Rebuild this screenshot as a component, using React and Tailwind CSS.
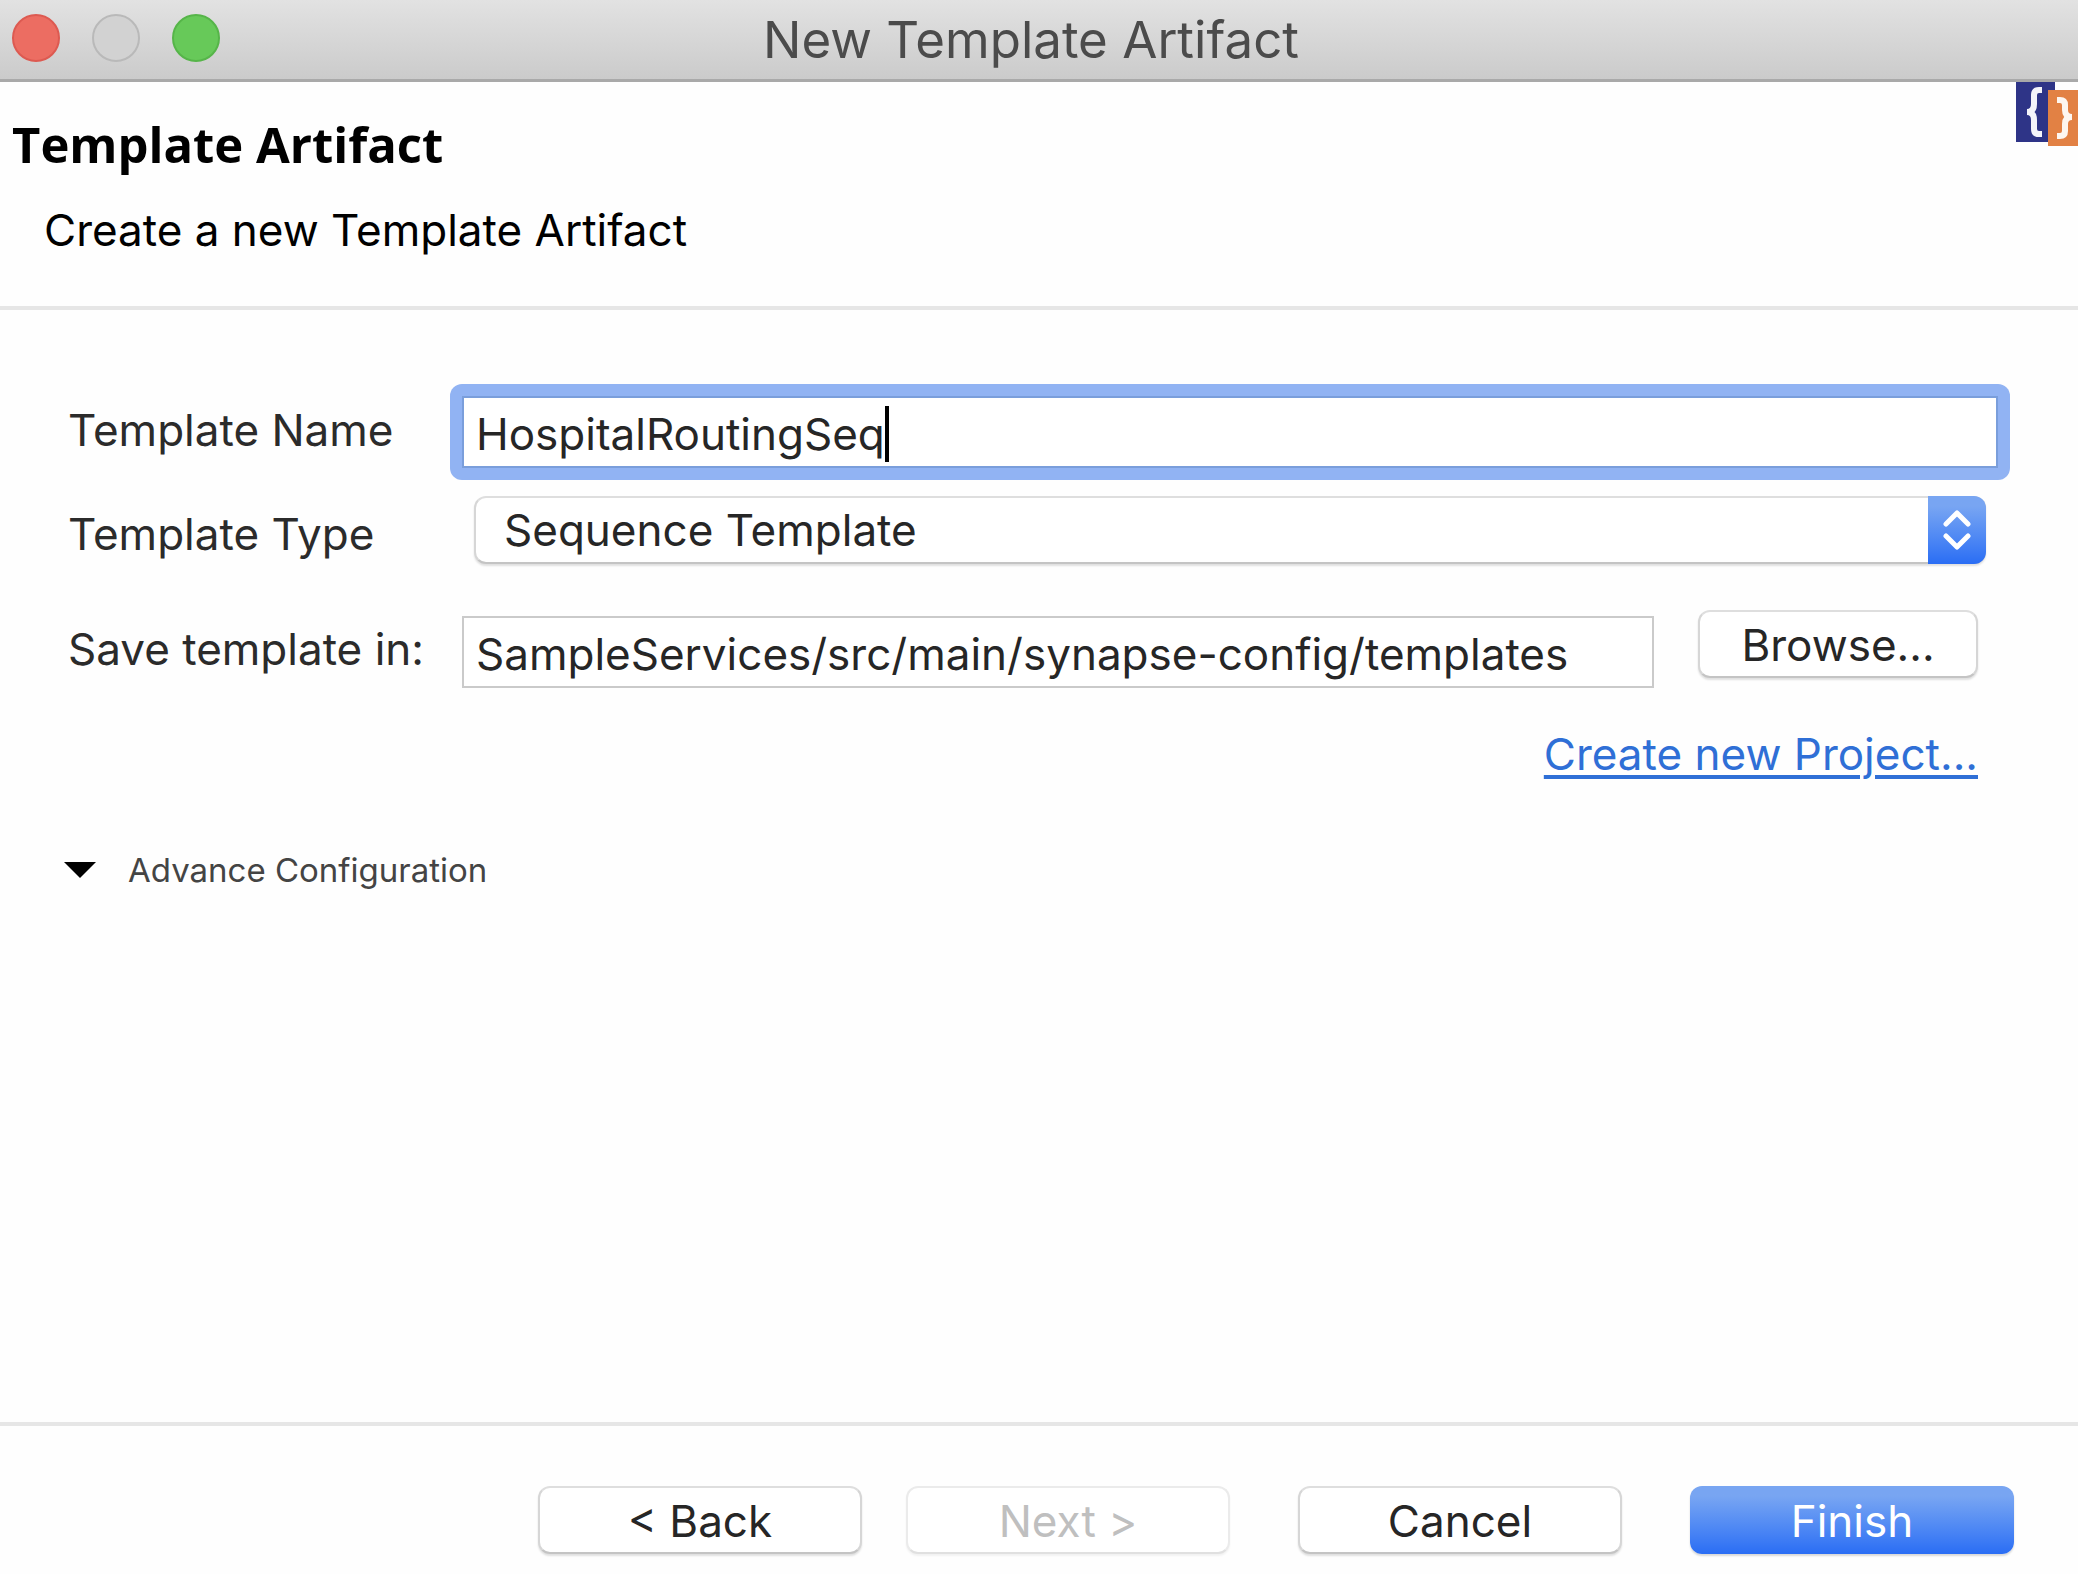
const buttonBase =
  "h-17 rounded-xl pt-0.5 text-[44px] leading-[60px] flex items-center justify-center";
const plainButton =
  "border-2 border-t-[#dedede] border-x-[#d6d6d6] border-b-[#c4c4c4] bg-white text-[#262626] shadow-[0_2px_2px_rgba(0,0,0,0.12)]";

function TitleBar() {
  return (
    <header className="grid h-[82px] grid-cols-[1fr_auto_1fr] items-center border-b-3 border-[#a9a9a9] bg-linear-to-b from-[#e2e2e2] to-[#cbcbcb] pl-3 pr-7">
      <div className="flex gap-8 pb-1">
        <button type="button" aria-label="Close" className="size-12 rounded-full border-2 border-[#dd5a51] bg-[#ec6d62]" />
        <button type="button" aria-label="Minimize" disabled className="size-12 rounded-full border-2 border-[#b9b9b9] bg-[#d2d2d2]" />
        <button type="button" aria-label="Zoom" className="size-12 rounded-full border-2 border-[#56b549] bg-[#67c959]" />
      </div>
      <h1 className="text-[51px] leading-[60px] text-[#4b4b4b]">New Template Artifact</h1>
    </header>
  );
}

function TemplateIcon() {
  return (
    <svg viewBox="0 0 62 65" className="h-[65px] w-[62px] shrink-0" aria-hidden="true">
      <rect width="39" height="60" fill="#2e3487" />
      <path
        d="M26 8h-3q-5 0-5 5v9q0 8-7 8q7 0 7 8v9q0 5 5 5h3"
        fill="none"
        stroke="#f4f4fa"
        strokeWidth="6"
      />
      <rect x="32" y="8" width="30" height="56" fill="#e28144" />
      <path
        d="M41 18h3q5 0 5 5v5q0 7 7 7q-7 0-7 7v7q0 5-5 5h-3"
        fill="none"
        stroke="#fdf6f0"
        strokeWidth="6"
      />
    </svg>
  );
}

function Banner() {
  return (
    <section className="flex justify-between border-b-4 border-[#e6e6e6] pb-[46px] pl-3">
      <div className="pt-[30px]">
        <h2 className="font-['Open_Sans',sans-serif] text-[49px] leading-[64px] font-bold text-black">
          Template Artifact
        </h2>
        <p className="mt-6 pl-8 text-[44px] leading-[60px] text-black">Create a new Template Artifact</p>
      </div>
      <TemplateIcon />
    </section>
  );
}

function Label({ htmlFor, children }) {
  return (
    <label htmlFor={htmlFor} className="w-[394px] shrink-0 text-[44px] leading-[60px] text-[#2b2b2b]">
      {children}
    </label>
  );
}

function Form() {
  return (
    <form id="template-form" className="flex flex-col pl-17 pt-[74px]">
      <div className="flex items-center pr-17">
        <div className="-mr-3 pb-1">
          <Label htmlFor="name">
            <span className="block w-[394px]">Template Name</span>
          </Label>
        </div>
        <div className="min-w-0 flex-1 rounded-xl bg-[#91b3f3] p-3">
          <div className="flex h-18 items-center border-2 border-[#7a9edb] bg-white px-3 pt-1">
            <input
              id="name"
              type="text"
              defaultValue="HospitalRoutingSeq"
              className="[field-sizing:content] text-[44px] leading-[60px] text-[#262626] outline-none"
            />
            <span className="h-14 w-1 bg-black" />
          </div>
        </div>
      </div>

      <div className="mt-4 flex items-end pr-23">
        <Label htmlFor="type">Template Type</Label>
        <div className="relative ml-3 min-w-0 flex-1">
          <select
            id="type"
            className={`${plainButton} block h-17 w-full appearance-none rounded-xl pl-7 text-[44px] leading-[60px] outline-none`}
          >
            <option>Sequence Template</option>
          </select>
          <span className="pointer-events-none absolute inset-y-0 right-0 flex w-[58px] items-center justify-center rounded-r-xl bg-linear-to-b from-[#78a5f2] from-15% to-[#2a6df4]">
            <svg viewBox="0 0 28 42" className="h-[42px] w-7" fill="none" stroke="white" strokeWidth="5" strokeLinecap="round" strokeLinejoin="round" aria-hidden="true">
              <path d="M3 15 14 4 25 15M3 27 14 38 25 27" />
            </svg>
          </span>
        </div>
      </div>

      <div className="mt-[46px] flex h-[78px] items-center pr-25">
        <Label htmlFor="location">Save template in:</Label>
        <input
          id="location"
          type="text"
          defaultValue="SampleServices/src/main/synapse-config/templates"
          className="h-18 min-w-0 flex-1 self-end border-2 border-[#cacaca] bg-white px-3 pt-1 text-[44px] leading-[60px] text-[#262626] outline-none"
        />
        <button type="button" className={`${buttonBase} ${plainButton} ml-11 w-70 self-start`}>
          Browse...
        </button>
      </div>

      <a
        href="#new-project"
        className="mt-9 mr-25 self-end text-[44px] leading-[60px] text-[#2f6fd6] underline decoration-4 underline-offset-5"
      >
        Create new Project...
      </a>

      <button type="button" aria-expanded="true" className="mt-[62px] -ml-1 flex items-center gap-8 self-start text-[33px] leading-[48px] text-[#444444]">
        <svg viewBox="0 0 32 16" className="h-4 w-8" aria-hidden="true">
          <path d="M0 0h32L16 16z" fill="black" />
        </svg>
        Advance Configuration
      </button>
    </form>
  );
}

function Footer() {
  return (
    <footer className="mt-auto flex justify-end border-t-4 border-[#e6e6e6] pt-15 pr-16 pb-5">
      <button type="button" className={`${buttonBase} ${plainButton} w-81`}>&lt; Back</button>
      <button
        type="button"
        disabled
        className={`${buttonBase} ml-11 w-81 border-2 border-[#ebebeb] border-b-[#e0e0e0] bg-white text-[#bfbfbf] shadow-[0_2px_2px_rgba(0,0,0,0.05)]`}
      >
        Next &gt;
      </button>
      <button type="button" className={`${buttonBase} ${plainButton} ml-17 w-81`}>Cancel</button>
      <button
        type="submit"
        form="template-form"
        className={`${buttonBase} ml-17 w-81 bg-linear-to-b from-[#78a5f2] from-15% to-[#2a6df4] text-white shadow-[0_2px_2px_rgba(0,0,0,0.15)]`}
      >
        Finish
      </button>
    </footer>
  );
}

export default function App() {
  return (
    <main className="flex min-h-screen flex-col bg-[#fefefe] font-['Inter',sans-serif]">
      <TitleBar />
      <Banner />
      <Form />
      <Footer />
    </main>
  );
}
